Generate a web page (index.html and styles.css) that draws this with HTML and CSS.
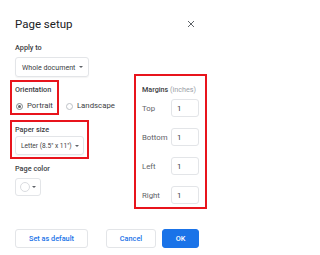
FILE: index.html
```html
<!DOCTYPE html>
<html>
<head>
<meta charset="utf-8">
<link rel="stylesheet" href="styles.css">
</head>
<body>
<div class="dialog">
  <div class="title-row">
    <div class="title">Page setup</div>
    <svg class="close" width="8" height="8" viewBox="0 0 8 8"><path d="M1 1L7 7M7 1L1 7" stroke="#5f6368" stroke-width="1"/></svg>
  </div>
  <div class="main">
    <div class="left">
      <div class="label">Apply to</div>
      <div class="select whole"><span>Whole document</span><span class="caret"></span></div>
      <div class="orient-row">
        <div class="annot orient">
          <div class="label">Orientation</div>
          <div class="radio-item"><span class="radio on"></span><span>Portrait</span></div>
        </div>
        <div class="radio-item"><span class="radio"></span><span>Landscape</span></div>
      </div>
      <div class="annot paper">
        <div class="label">Paper size</div>
        <div class="select letter"><span>Letter (8.5" x 11")</span><span class="caret"></span></div>
      </div>
      <div class="label pc">Page color</div>
      <div class="color-btn"><span class="swatch"></span><span class="caret"></span></div>
    </div>
    <div class="annot margins">
      <div class="label mhead">Margins <span class="muted">(inches)</span></div>
      <div class="mgrid">
        <span class="mlabel">Top</span><input class="minput" value="1">
        <span class="mlabel">Bottom</span><input class="minput" value="1">
        <span class="mlabel">Left</span><input class="minput" value="1">
        <span class="mlabel">Right</span><input class="minput" value="1">
      </div>
    </div>
  </div>
  <div class="footer">
    <div class="btn default">Set as default</div>
    <div class="btn cancel">Cancel</div>
    <div class="btn ok">OK</div>
  </div>
</div>
</body>
</html>
```
FILE: styles.css
```css
html, body {
  margin: 0;
  padding: 0;
  background: #ffffff;
}
body {
  font-family: Roboto, "Liberation Sans", sans-serif;
  color: #3c4043;
}
.dialog {
  width: 212px;
  height: 255px;
  box-sizing: border-box;
  padding: 16px 13px 0 15px;
}
.title-row {
  display: flex;
  justify-content: space-between;
  align-items: center;
  height: 16px;
}
.title {
  font-size: 11.5px;
  line-height: 16px;
  color: #202124;
}
.close {
  margin-right: 4px;
}
.main {
  display: flex;
  justify-content: space-between;
  align-items: flex-start;
}
.left {
  display: flex;
  flex-direction: column;
  align-items: flex-start;
  padding-top: 11px;
}
.label {
  font-size: 7.3px;
  font-weight: 500;
  line-height: 10px;
  color: #3c4043;
  white-space: nowrap;
}
.select {
  display: flex;
  align-items: center;
  gap: 4px;
  height: 20px;
  box-sizing: border-box;
  border: 1px solid #e3e5e8;
  border-radius: 3px;
  padding: 0 5px 0 6px;
  font-size: 7.1px;
  color: #3c4043;
  margin-top: 4px;
  white-space: nowrap;
  box-shadow: 0 1px 1px rgba(60,64,67,0.06);
}
.letter {
  height: 19px;
  margin-top: 1px;
  font-size: 6.6px;
  gap: 3px;
  padding: 0 4px 0 5px;
}
.caret {
  width: 0;
  height: 0;
  border-left: 2px solid transparent;
  border-right: 2px solid transparent;
  border-top: 2px solid #5f6368;
}
.annot {
  border: 2px solid #e8141c;
}
.orient-row {
  display: flex;
  align-items: flex-end;
  gap: 6px;
  margin-top: 3px;
  margin-left: -5px;
}
.orient {
  padding: 2px 4px 1px 3px;
}
.orient .label {
  line-height: 12px;
}
.radio-item {
  display: flex;
  align-items: center;
  gap: 4px;
  font-size: 7.8px;
  line-height: 12px;
  height: 12px;
  margin-top: 4px;
  color: #3c4043;
  white-space: nowrap;
}
.orient-row > .radio-item {
  margin-bottom: 3px;
}
.radio {
  width: 7px;
  height: 7px;
  box-sizing: border-box;
  border: 1px solid #bdc1c6;
  border-radius: 50%;
  position: relative;
  margin-left: 1px;
}
.radio.on {
  border-color: #80868b;
}
.radio.on::after {
  content: "";
  position: absolute;
  left: 1px;
  top: 1px;
  width: 3px;
  height: 3px;
  border-radius: 50%;
  background: #5f6368;
}
.paper {
  margin-top: 5px;
  margin-left: -5px;
  padding: 3px 3px 2px 3px;
}
.pc {
  margin-top: 5px;
}
.color-btn {
  margin-top: 4px;
  width: 26px;
  height: 18px;
  box-sizing: border-box;
  border: 1px solid #e3e5e8;
  border-radius: 3px;
  display: flex;
  align-items: center;
  gap: 2px;
  padding-left: 4px;
}
.swatch {
  width: 10px;
  height: 10px;
  box-sizing: border-box;
  border: 1px solid #dadce0;
  border-radius: 50%;
  background: #fff;
}
.margins {
  margin-top: 42px;
  margin-right: -8px;
  padding: 9px 6px 3px 6px;
  width: 73px;
  box-sizing: border-box;
}
.mhead {
  font-size: 7.2px;
}
.muted {
  color: #9aa0a6;
  font-weight: 400;
}
.mgrid {
  display: grid;
  grid-template-columns: 1fr 28px;
  row-gap: 11px;
  align-items: center;
  margin-top: 4px;
}
.mlabel {
  font-size: 7.8px;
  color: #5f6368;
}
.minput {
  width: 28px;
  height: 18px;
  box-sizing: border-box;
  border: 1px solid #e3e5e8;
  border-radius: 3px;
  padding: 0 0 0 5px;
  margin: 0;
  font-family: Roboto, "Liberation Sans", sans-serif;
  font-size: 7.8px;
  color: #3c4043;
  background: #fff;
  outline: none;
}
.footer {
  display: flex;
  align-items: center;
  margin-top: 20px;
}
.btn {
  height: 19px;
  box-sizing: border-box;
  border: 1px solid #e3e5e8;
  border-radius: 3px;
  display: flex;
  align-items: center;
  justify-content: center;
  font-size: 7.3px;
  font-weight: 500;
  color: #1a73e8;
  background: #fff;
}
.default {
  width: 73px;
}
.cancel {
  width: 50px;
  margin-left: auto;
}
.ok {
  width: 37px;
  margin-left: 6px;
  background: #1a73e8;
  border-color: #1a73e8;
  color: #fff;
}
```
